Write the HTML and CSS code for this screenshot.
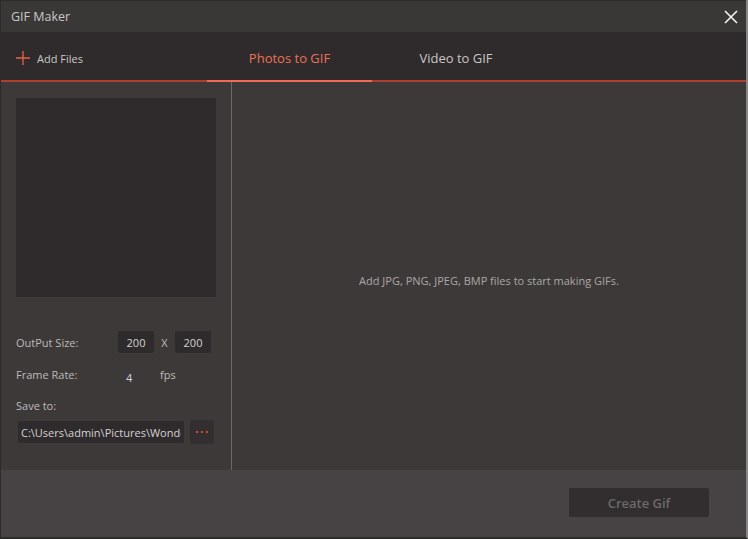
FILE: index.html
```html
<!DOCTYPE html>
<html lang="en">
<head>
    <meta charset="UTF-8">
    <title>GIF Maker</title>
    <link rel="stylesheet" href="styles.css">
</head>
<body>
    <div class="window">
        <div class="titlebar">
            <span class="title">GIF Maker</span>
            <button class="close" title="Close">
                <svg width="14" height="14" viewBox="0 0 14 14"><path d="M1 1L13 13M13 1L1 13" stroke="#f2f2f2" stroke-width="1.6"/></svg>
            </button>
        </div>

        <div class="toolbar">
            <button class="add-files">
                <svg width="14" height="14" viewBox="0 0 14 14"><path d="M7 0V14M0 7H14" stroke="#e8614a" stroke-width="1.3"/></svg>
                <span>Add Files</span>
            </button>
            <div class="tabs">
                <button class="tab active">Photos to GIF</button>
                <button class="tab">Video to GIF</button>
            </div>
        </div>

        <div class="content">
            <div class="sidebar">
                <div class="preview"></div>

                <div class="row size-row">
                    <span class="label">OutPut Size:</span>
                    <input class="num" type="text" value="200">
                    <span class="times">X</span>
                    <input class="num" type="text" value="200">
                </div>
                <div class="row rate-row">
                    <span class="label">Frame Rate:</span>
                    <span class="rate">4</span>
                    <span class="fps">fps</span>
                </div>
                <div class="save-label">Save to:</div>
                <div class="row path-row">
                    <input class="path" type="text" value="C:\Users\admin\Pictures\Wondershare">
                    <button class="browse" title="Browse">
                        <svg width="12" height="2" viewBox="0 0 12 2"><path d="M0 0H2V2H0ZM5 0H7V2H5ZM10 0H12V2H10Z" fill="#d2452f"/></svg>
                    </button>
                </div>
            </div>
            <div class="main">
                <p class="empty">Add JPG, PNG, JPEG, BMP files to start making GIFs.</p>
            </div>
        </div>

        <div class="footer">
            <button class="create" disabled>Create Gif</button>
        </div>
    </div>
</body>
</html>
```

FILE: styles.css
```css
* {
    margin: 0;
    padding: 0;
    box-sizing: border-box;
    font-family: "Open Sans", "Noto Sans", sans-serif;
}

body {
    background-color: #2a2727;
    width: 748px;
    height: 539px;
    overflow: hidden;
}

button, input {
    font-family: inherit;
    border: none;
    outline: none;
}

.window {
    width: 748px;
    height: 539px;
    display: flex;
    flex-direction: column;
    background-color: #3d3939;
    border-left: 1px solid #2e2b2b;
    border-right: 2px solid #8a8787;
    border-bottom: 2px solid #2e2b2b;
}

.titlebar {
    height: 32px;
    background-color: #3a3737;
    display: flex;
    align-items: center;
    justify-content: space-between;
    padding: 0 8px 0 10px;
    border-top: 1px solid #2e2b2b;
}

.title {
    color: #c9c7c7;
    font-size: 12.5px;
}

.close {
    background: none;
    width: 14px;
    height: 14px;
    display: flex;
    cursor: pointer;
}

.toolbar {
    height: 50px;
    background-color: #2f2b2c;
    display: flex;
    border-bottom: 2px solid #b03e2e;
}

.add-files {
    width: 206px;
    background: none;
    display: flex;
    align-items: center;
    gap: 7px;
    padding-left: 15px;
    color: #c9c7c7;
    font-size: 11px;
    padding-top: 4px;
}

.tabs {
    display: flex;
}

.tab {
    width: 165px;
    background: none;
    color: #c9c7c7;
    font-size: 13px;
    margin-bottom: -2px;
    border-bottom: 2px solid transparent;
    padding-top: 3px;
    cursor: pointer;
}

.tab.active {
    color: #ea7158;
    border-bottom-color: #f26a52;
}

.tab + .tab {
    padding-left: 3px;
}

.content {
    flex: 1;
    display: flex;
}

.sidebar {
    width: 231px;
    border-right: 1px solid #6c6868;
    padding: 16px 0 0 15px;
    font-size: 11px;
    color: #bdbaba;
}

.preview {
    width: 200px;
    height: 199px;
    background-color: #2f2b2c;
}

.row {
    display: flex;
    align-items: center;
}

.size-row {
    margin-top: 34px;
}

.label {
    width: 102px;
}

.num {
    width: 36px;
    height: 22px;
    background-color: #2f2b2c;
    color: #d4d2d2;
    font-size: 11px;
    text-align: center;
    border-radius: 2px;
}

.times {
    width: 21px;
    text-align: center;
}

.rate-row {
    margin-top: 11px;
}

.rate {
    width: 42px;
    padding-left: 8px;
    padding-top: 6px;
    color: #d4d2d2;
}

.save-label {
    margin-top: 13px;
}

.path-row {
    margin-top: 7px;
    gap: 6px;
}

.path {
    width: 166px;
    height: 22px;
    margin-left: 2px;
    background-color: #2f2b2c;
    color: #d4d2d2;
    font-size: 11px;
    padding: 0 3px;
    border-radius: 2px;
}

.browse {
    width: 24px;
    height: 24px;
    background-color: #332f30;
    border-radius: 2px;
    display: flex;
    align-items: center;
    justify-content: center;
    cursor: pointer;
}

.main {
    flex: 1;
    display: flex;
    align-items: center;
    justify-content: center;
    padding-top: 8px;
}

.empty {
    color: #aaa7a7;
    font-size: 11px;
}

.footer {
    height: 67px;
    background-color: #474243;
    display: flex;
    align-items: center;
    justify-content: flex-end;
    padding-right: 37px;
    padding-bottom: 2px;
}

.create {
    width: 140px;
    height: 29px;
    background-color: #322e2f;
    color: #6d6969;
    font-size: 13px;
    font-weight: 600;
    border-radius: 2px;
}
```
